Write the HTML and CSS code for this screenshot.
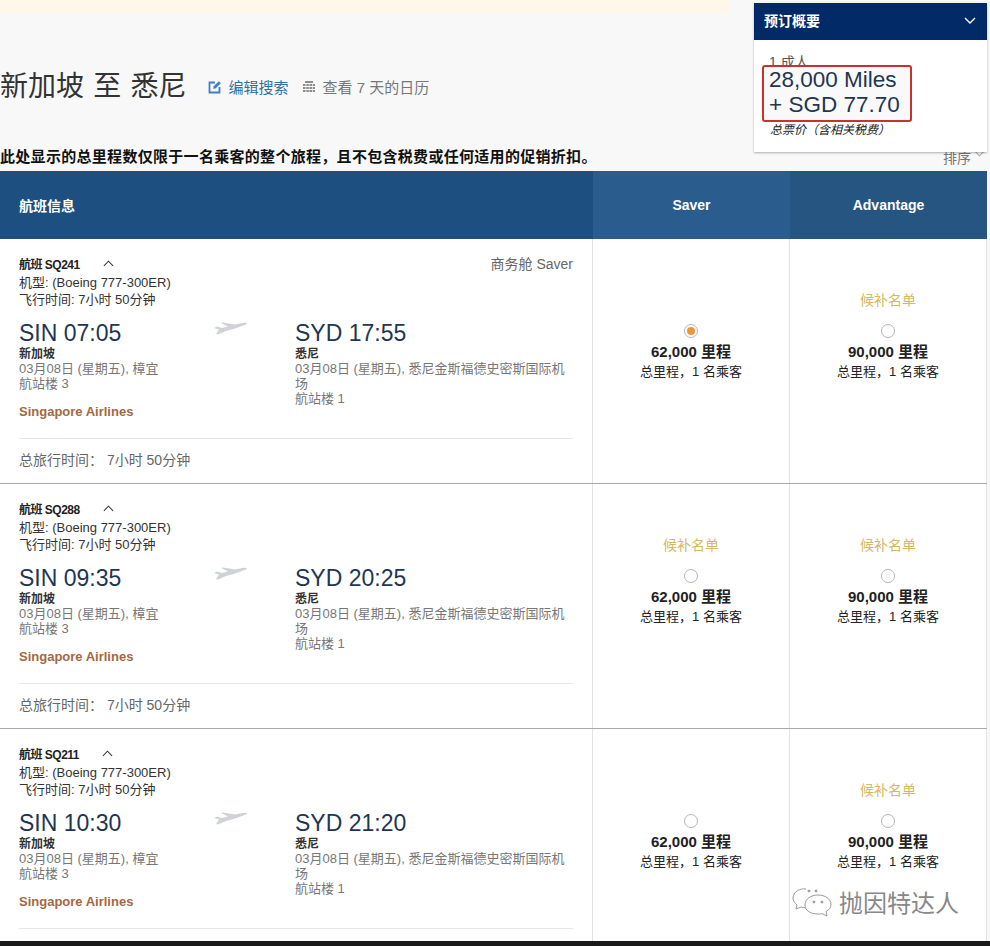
FILE: index.html
```html
<!DOCTYPE html>
<html lang="zh-CN">
<head>
    <meta charset="UTF-8">
    <title>预订航班</title>
    <link rel="stylesheet" href="styles.css">
</head>
<body>
    <div class="page">
        <div class="top-strip"></div>

        <div class="search-head">
            <h1>新加坡 至 悉尼</h1>
            <a class="edit-link">
                <svg class="head-icon" viewBox="0 0 14 14"><path d="M7 2.500H1.500v10h10V7" fill="none" stroke="#3f7fc4" stroke-width="1.800"/><path d="M5.500 6.500L10.800 1.200l2 2L7.500 8.500l-2.300.3z" fill="#3f7fc4"/></svg>
                编辑搜索
            </a>
            <span class="calendar-link">
                <svg class="head-icon" viewBox="0 0 14 14" fill="#8c8c8c"><path d="M3 1h8v2H3zM1 4h2.500v2H1zM4.300 4h2.500v2H4.300zM7.500 4H10v2H7.500zM10.700 4H13v2h-2.300zM1 7h2.500v2H1zM4.300 7h2.500v2H4.300zM7.500 7H10v2H7.500zM10.700 7H13v2h-2.300zM1 10h2.500v2H1zM4.300 10h2.500v2H4.300zM7.500 10H10v2H7.500zM10.700 10H13v2h-2.300z"/></svg>
                查看 7 天的日历
            </span>
        </div>

        <div class="notice-row">
            <p class="notice">此处显示的总里程数仅限于一名乘客的整个旅程，且不包含税费或任何适用的促销折扣。</p>
            <span class="sort">排序<svg class="chev" viewBox="0 0 12 7"><path d="M1 1l5 5 5-5" fill="none" stroke="#aaa" stroke-width="1.200"/></svg></span>
        </div>

        <div class="table">
            <div class="table-head">
                <div class="head-info">航班信息</div>
                <div class="head-fare saver">Saver</div>
                <div class="head-fare advantage">Advantage</div>
            </div>

            <div class="row">
                <div class="flight">
                    <div class="flight-top">
                        <div>
                            <div class="flight-no">航班 SQ241 <svg class="caret" viewBox="0 0 12 7"><path d="M1 6l5-5 5 5" fill="none" stroke="#333" stroke-width="1.100"/></svg></div>
                            <div class="meta">机型: (Boeing 777-300ER)</div>
                            <div class="meta">飞行时间: 7小时 50分钟</div>
                        </div>
                        <div class="cabin">商务舱 Saver</div>
                    </div>
                    <div class="route">
                        <div class="stop origin">
                            <div class="time">SIN 07:05</div>
                            <div class="city">新加坡</div>
                            <div class="detail">03月08日 (星期五), 樟宜</div>
                            <div class="detail">航站楼 3</div>
                            <div class="airline">Singapore Airlines</div>
                        </div>
                        <svg class="plane" viewBox="0 0 34 14"><path d="M0 7c2 .5 3.500 1 5 1.500L2 13l2 .5 8-3.500c6-1.500 14-4 20-6.500 1.500-.7 1-2-1-1.800-3 .3-7 1-10 1.800L9 1.500 7 2l7 3.500-6 1.500-5-1.500z" fill="#d0d3d6"/></svg>
                        <div class="stop dest">
                            <div class="time">SYD 17:55</div>
                            <div class="city">悉尼</div>
                            <div class="detail">03月08日 (星期五), 悉尼金斯福德史密斯国际机场</div>
                            <div class="detail">航站楼 1</div>
                        </div>
                    </div>
                    <div class="total">总旅行时间： 7小时 50分钟</div>
                </div>
                <div class="fare">
                    <div class="radio checked"></div>
                    <div class="miles">62,000 里程</div>
                    <div class="miles-note">总里程，1 名乘客</div>
                </div>
                <div class="fare">
                    <div class="waitlist">候补名单</div>
                    <div class="radio"></div>
                    <div class="miles">90,000 里程</div>
                    <div class="miles-note">总里程，1 名乘客</div>
                </div>
            </div>

            <div class="row">
                <div class="flight">
                    <div class="flight-top">
                        <div>
                            <div class="flight-no">航班 SQ288 <svg class="caret" viewBox="0 0 12 7"><path d="M1 6l5-5 5 5" fill="none" stroke="#333" stroke-width="1.100"/></svg></div>
                            <div class="meta">机型: (Boeing 777-300ER)</div>
                            <div class="meta">飞行时间: 7小时 50分钟</div>
                        </div>
                    </div>
                    <div class="route">
                        <div class="stop origin">
                            <div class="time">SIN 09:35</div>
                            <div class="city">新加坡</div>
                            <div class="detail">03月08日 (星期五), 樟宜</div>
                            <div class="detail">航站楼 3</div>
                            <div class="airline">Singapore Airlines</div>
                        </div>
                        <svg class="plane" viewBox="0 0 34 14"><path d="M0 7c2 .5 3.500 1 5 1.500L2 13l2 .5 8-3.500c6-1.500 14-4 20-6.500 1.500-.7 1-2-1-1.800-3 .3-7 1-10 1.800L9 1.500 7 2l7 3.500-6 1.500-5-1.500z" fill="#d0d3d6"/></svg>
                        <div class="stop dest">
                            <div class="time">SYD 20:25</div>
                            <div class="city">悉尼</div>
                            <div class="detail">03月08日 (星期五), 悉尼金斯福德史密斯国际机场</div>
                            <div class="detail">航站楼 1</div>
                        </div>
                    </div>
                    <div class="total">总旅行时间： 7小时 50分钟</div>
                </div>
                <div class="fare">
                    <div class="waitlist">候补名单</div>
                    <div class="radio"></div>
                    <div class="miles">62,000 里程</div>
                    <div class="miles-note">总里程，1 名乘客</div>
                </div>
                <div class="fare">
                    <div class="waitlist">候补名单</div>
                    <div class="radio"></div>
                    <div class="miles">90,000 里程</div>
                    <div class="miles-note">总里程，1 名乘客</div>
                </div>
            </div>

            <div class="row last">
                <div class="flight">
                    <div class="flight-top">
                        <div>
                            <div class="flight-no">航班 SQ211 <svg class="caret" viewBox="0 0 12 7"><path d="M1 6l5-5 5 5" fill="none" stroke="#333" stroke-width="1.100"/></svg></div>
                            <div class="meta">机型: (Boeing 777-300ER)</div>
                            <div class="meta">飞行时间: 7小时 50分钟</div>
                        </div>
                    </div>
                    <div class="route">
                        <div class="stop origin">
                            <div class="time">SIN 10:30</div>
                            <div class="city">新加坡</div>
                            <div class="detail">03月08日 (星期五), 樟宜</div>
                            <div class="detail">航站楼 3</div>
                            <div class="airline">Singapore Airlines</div>
                        </div>
                        <svg class="plane" viewBox="0 0 34 14"><path d="M0 7c2 .5 3.500 1 5 1.500L2 13l2 .5 8-3.500c6-1.500 14-4 20-6.500 1.500-.7 1-2-1-1.800-3 .3-7 1-10 1.800L9 1.500 7 2l7 3.500-6 1.500-5-1.500z" fill="#d0d3d6"/></svg>
                        <div class="stop dest">
                            <div class="time">SYD 21:20</div>
                            <div class="city">悉尼</div>
                            <div class="detail">03月08日 (星期五), 悉尼金斯福德史密斯国际机场</div>
                            <div class="detail">航站楼 1</div>
                        </div>
                    </div>
                    <div class="total-line"></div>
                </div>
                <div class="fare">
                    <div class="radio"></div>
                    <div class="miles">62,000 里程</div>
                    <div class="miles-note">总里程，1 名乘客</div>
                </div>
                <div class="fare">
                    <div class="waitlist">候补名单</div>
                    <div class="radio"></div>
                    <div class="miles">90,000 里程</div>
                    <div class="miles-note">总里程，1 名乘客</div>
                </div>
            </div>
        </div>

        <div class="bottom-bar"></div>

        <div class="summary">
            <div class="summary-head">
                <span>预订概要</span>
                <svg class="summary-chev" viewBox="0 0 12 7"><path d="M1 1l5 5 5-5" fill="none" stroke="#fff" stroke-width="1.400"/></svg>
            </div>
            <div class="summary-body">
                <div class="pax">1 成人</div>
                <div class="price-box">
                    <div>28,000 Miles</div>
                    <div>+ SGD 77.70</div>
                </div>
                <div class="price-note">总票价（含相关税费）</div>
            </div>
        </div>

        <div class="watermark">
            <svg class="wm-icon" viewBox="0 0 40 30" fill="none" stroke="#9a9a9a" stroke-width="1"><path d="M14 2C8 1 1 5 1 11c0 3 2 5 4 7l-1 4 5-2c2 .6 3 .6 4 .5"/><path d="M26 8c-7 0-13 4-13 10s6 9 13 9c2 0 3 0 4-.4l5 2.400-1-4.500c3-1.500 5-4 5-7 0-5.500-6-9.500-13-9.500z"/><circle cx="22" cy="15" r="1" fill="#9a9a9a"/><circle cx="30" cy="15" r="1" fill="#9a9a9a"/><circle cx="17" cy="4" r="1" fill="#9a9a9a"/><circle cx="24" cy="4" r="1" fill="#9a9a9a"/></svg>
            <span>抛因特达人</span>
        </div>
    </div>
</body>
</html>
```

FILE: styles.css
```css
body {
    margin: 0;
    padding: 0;
    background-color: #f8f8f8;
    color: #222;
    font-family: "Liberation Sans", "Noto Sans CJK SC", sans-serif;
    font-size: 13px;
}
.page {
    position: relative;
    width: 990px;
    height: 946px;
    overflow: hidden;
}
.top-strip {
    width: 730px;
    height: 13px;
    background-color: #fff8ea;
}
.search-head {
    display: flex;
    align-items: center;
    height: 50px;
    margin-top: 47px;
}
.search-head h1 {
    margin: 0 21px 2px 0;
    font-size: 28px;
    font-weight: normal;
    word-spacing: 1.500px;
    color: #333;
}
.edit-link {
    display: flex;
    align-items: center;
    gap: 7px;
    margin: 3px 13px 0 0;
    font-size: 15px;
    color: #2f6f9f;
}
.calendar-link {
    display: flex;
    align-items: center;
    gap: 7px;
    margin-top: 3px;
    font-size: 15px;
    color: #777;
}
.head-icon {
    width: 14px;
    height: 14px;
}
.notice-row {
    display: flex;
    justify-content: space-between;
    align-items: flex-end;
    height: 61px;
    box-sizing: border-box;
    padding-right: 5px;
}
.notice {
    margin: 0 0 5px;
    font-family: "Liberation Sans", "Noto Sans CJK TC", sans-serif;
    font-size: 15px;
    font-weight: bold;
    letter-spacing: 0.300px;
    color: #111;
}
.sort {
    display: flex;
    align-items: flex-start;
    gap: 3px;
    margin-bottom: 4px;
    font-size: 14px;
    color: #777;
}
.chev {
    width: 11px;
    height: 7px;
    margin-top: 3px;
}
.table {
    width: 987px;
    background-color: #fff;
}
.table-head {
    display: grid;
    grid-template-columns: 593px 197px 197px;
    height: 68px;
    color: #fff;
    font-size: 14px;
    font-weight: bold;
}
.head-info, .head-fare {
    display: flex;
    align-items: center;
}
.head-info {
    padding-left: 19px;
    background-color: #1d4f80;
}
.head-fare {
    justify-content: center;
}
.saver {
    background-color: #2a5c8d;
}
.advantage {
    background-color: #265581;
}
.row {
    display: grid;
    grid-template-columns: 593px 197px 197px;
    height: 245px;
    box-sizing: border-box;
    border-bottom: 1px solid #a8a8a8;
}
.row.last {
    height: 212px;
    border-bottom: none;
}
.flight {
    padding: 17px 19px 0;
    border-right: 1px solid #e2e2e2;
    line-height: 17px;
    color: #333;
}
.flight-top {
    display: flex;
    justify-content: space-between;
}
.flight-no {
    display: flex;
    align-items: center;
    gap: 23px;
    height: 18px;
    font-size: 12px;
    font-weight: bold;
    letter-spacing: -0.500px;
    color: #222;
}
.caret {
    width: 11px;
    height: 7px;
    margin-bottom: 3px;
}
.meta {
    font-size: 13px;
}
.cabin {
    font-size: 14px;
    color: #666;
}
.route {
    display: flex;
    align-items: flex-start;
    margin-top: 11px;
}
.stop {
    flex: none;
}
.origin {
    width: 195px;
}
.dest {
    width: 278px;
}
.plane {
    width: 34px;
    height: 14px;
    margin: 2px 47px 0 0;
}
.time {
    font-size: 23px;
    line-height: 28px;
    color: #1f3652;
}
.city {
    margin-top: 1px;
    font-size: 12px;
    line-height: 13px;
    font-weight: bold;
    color: #333;
}
.detail {
    font-size: 13px;
    line-height: 15px;
    color: #777;
}
.airline {
    margin-top: 12px;
    font-size: 13px;
    font-weight: bold;
    color: #a5673f;
}
.total {
    height: 45px;
    margin-top: 18px;
    padding-top: 13px;
    box-sizing: border-box;
    border-top: 1px solid #e5e5e5;
    font-size: 14px;
    color: #666;
}
.total-line {
    margin-top: 18px;
    border-top: 1px solid #e5e5e5;
}
.fare {
    display: flex;
    flex-direction: column;
    align-items: center;
    padding-top: 85px;
    box-sizing: border-box;
    border-right: 1px solid #e2e2e2;
}
.waitlist {
    height: 17px;
    margin-top: -32px;
    margin-bottom: 15px;
    font-size: 14px;
    line-height: 17px;
    color: #d4b866;
}
.radio {
    width: 12px;
    height: 12px;
    border: 1px solid #b5b5b5;
    border-radius: 50%;
    background-color: #fff;
}
.radio.checked {
    position: relative;
}
.radio.checked::after {
    content: "";
    position: absolute;
    top: 2px;
    left: 2px;
    width: 8px;
    height: 8px;
    border-radius: 50%;
    background-color: #f0943c;
}
.miles {
    margin-top: 4px;
    font-size: 15px;
    line-height: 20px;
    font-weight: bold;
    color: #222;
}
.miles-note {
    font-family: "Liberation Sans", "Noto Sans CJK TC", sans-serif;
    font-size: 13px;
    line-height: 20px;
    color: #222;
}
.bottom-bar {
    height: 5px;
    background-color: #1a1a1a;
}
/* floating booking summary */
.summary {
    position: absolute;
    top: 3px;
    left: 754px;
    width: 233px;
    height: 149px;
    background-color: #fff;
    box-shadow: 0 1px 2px rgba(0, 0, 0, 0.3);
}
.summary-head {
    display: flex;
    justify-content: space-between;
    align-items: center;
    height: 37px;
    box-sizing: border-box;
    padding: 0 11px 3px 10px;
    background-color: #012a66;
    color: #fff;
    font-size: 14px;
    font-weight: bold;
}
.summary-chev {
    width: 12px;
    height: 7px;
}
.summary-body {
    position: relative;
    padding: 13px 0 0 15px;
}
.pax {
    height: 12px;
    overflow: hidden;
    font-size: 14px;
    line-height: 18px;
    color: #555;
}
.price-box {
    position: absolute;
    top: 25px;
    left: 8px;
    width: 150px;
    height: 57px;
    box-sizing: border-box;
    padding-left: 5px;
    border: 2px solid #c8322c;
    border-radius: 3px;
    background-color: #f9f9f9;
    font-size: 22.500px;
    line-height: 25px;
    color: #1f3652;
}
.price-note {
    position: absolute;
    top: 83px;
    left: 16px;
    font-size: 12px;
    line-height: 14px;
    font-style: italic;
    color: #222;
}
.watermark {
    position: absolute;
    top: 884px;
    left: 792px;
    display: flex;
    align-items: center;
    gap: 7px;
    font-size: 24px;
    color: #888;
}
.wm-icon {
    width: 40px;
    height: 30px;
}
```
